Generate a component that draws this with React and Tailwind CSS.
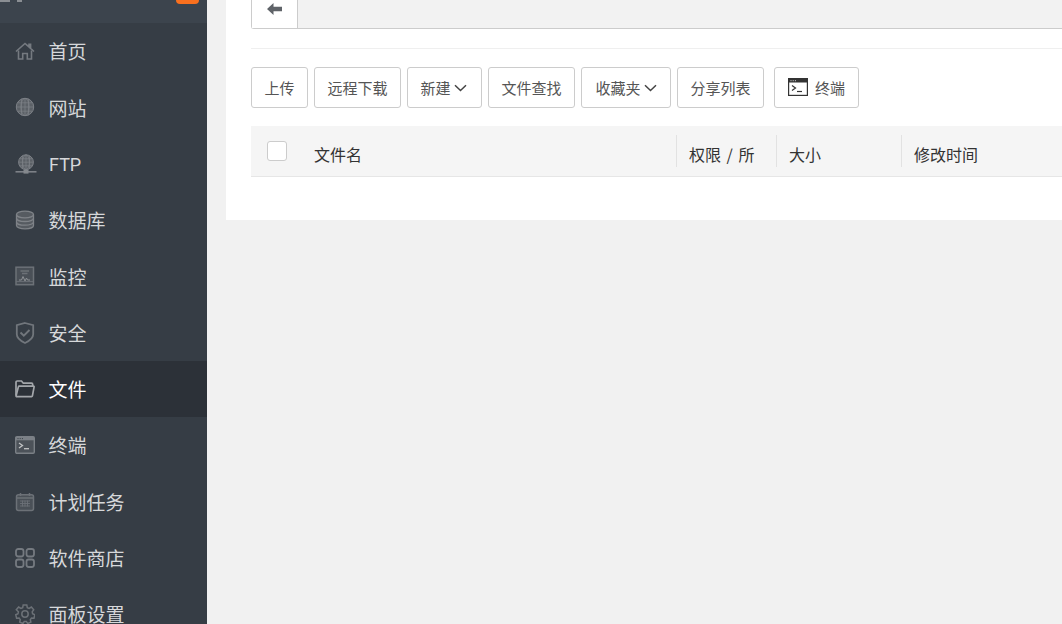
import React from "react";

const S = "#757a80";
const Home = () => (
  <svg width="20" height="20" viewBox="0 0 20 20" fill="none" stroke={S} strokeWidth="1.600">
    <path d="M1 10.500 10 2.500l4 3.400V3.200h1.600v4.200l3.400 3.100" />
    <path d="M3.500 9.500V18h4.200v-5.500h4.600V18h4.200V9.500" />
  </svg>
);
const Globe = () => (
  <svg width="20" height="20" viewBox="0 0 20 20" fill="#5c6167" stroke="#7d8187" strokeWidth="0.700">
    <circle cx="10" cy="10" r="8.700" strokeWidth="1" />
    <ellipse cx="10" cy="10" rx="4.200" ry="8.600" fill="none" />
    <path d="M10 1.400v17.200M1.400 10h17.200M2.600 5.800h14.800M2.600 14.200h14.800M6.500 1.800v16.400M13.500 1.800v16.400" fill="none" />
  </svg>
);
const FtpIcon = () => (
  <svg width="22" height="20" viewBox="0 0 22 20" fill="#5c6167" stroke="#7d8187" strokeWidth="0.700">
    <circle cx="11" cy="8.200" r="7.400" strokeWidth="1" />
    <ellipse cx="11" cy="8.200" rx="3.400" ry="7.300" fill="none" />
    <path d="M11 1v14.600M3.700 8.200h14.600M4.600 4.800h12.800M4.600 11.800h12.800M7.500 2v12.500M14.500 2v12.500" fill="none" />
    <path d="M0.500 17.800h21" fill="none" strokeWidth="1.600" />
    <rect x="8.500" y="15.800" width="5" height="3.800" stroke="none" fill="#84888d" />
  </svg>
);
const Db = () => (
  <svg width="20" height="20" viewBox="0 0 20 20" fill="#565b61" stroke="#7f8388" strokeWidth="1.300">
    <path d="M1.500 4.500C1.500 2.600 5.300 1.200 10 1.200s8.500 1.400 8.500 3.300v11c0 1.900-3.800 3.300-8.500 3.300s-8.500-1.400-8.500-3.300z" />
    <path d="M1.500 4.500c0 1.900 3.800 3.300 8.500 3.300s8.500-1.400 8.500-3.300M1.500 8.200c0 1.900 3.800 3.300 8.500 3.300s8.500-1.400 8.500-3.300M1.500 11.900c0 1.900 3.800 3.300 8.500 3.300s8.500-1.400 8.500-3.300" fill="none" />
  </svg>
);
const Monitor = () => (
  <svg width="20" height="20" viewBox="0 0 20 20" fill="#4a5057" stroke="#6c7177" strokeWidth="1.500">
    <rect x="1" y="1.200" width="17.500" height="17.500" />
    <path d="M4 14h2.500l1.500-3.500 2 4.500 1.500-3 1 2h2.500" fill="none" stroke="#8d9195" strokeWidth="1" />
    <path d="M5.500 5h8.500M7 7.500h5.500" stroke="#6c7177" strokeWidth="1.400" fill="none" />
    <path d="M1 15.500h17.500" strokeWidth="0.800" fill="none" />
  </svg>
);
const Shield = () => (
  <svg width="20" height="22" viewBox="0 0 20 22" fill="none" stroke="#71767c" strokeWidth="1.800">
    <path d="M10 1 18.200 3.200v9c0 3.600-3.400 6.500-8.200 8.800-4.800-2.300-8.200-5.200-8.200-8.800v-9z" />
    <path d="m5.500 10.500 3.300 3.200 5.700-5.700" strokeWidth="1.900" />
  </svg>
);
const Folder = () => (
  <svg width="20" height="18" viewBox="0 0 20 18" fill="none" stroke="#a3a6aa" strokeWidth="1.700">
    <path d="M1 15.500V2.200C1 1.500 1.500 1 2.200 1h4.300l1.800 2.200h8.200c.7 0 1.200.5 1.200 1.200V6" />
    <path d="M4.200 6.200h14.300c.4 0 .7.300.6.700l-1.700 9c-.1.400-.4.700-.8.700H1.800c-.5 0-.8-.4-.7-.8l2.300-8.900c.1-.4.400-.7.800-.7z" />
  </svg>
);
const Term = () => (
  <svg width="20" height="18" viewBox="0 0 20 18">
    <rect x="0.700" y="0.700" width="18.600" height="16.600" rx="1.200" fill="#4c5259" stroke="#7b8086" strokeWidth="1.400" />
    <rect x="1" y="1" width="18" height="3.300" fill="#7b8086" />
    <path d="M2.500 2.600h1M4.700 2.600h1M6.900 2.600h1" stroke="#363d45" strokeWidth="1" />
    <path d="m4 7 3.500 2.500L4 12" fill="none" stroke="#c2c4c6" strokeWidth="1.300" />
    <path d="M9 12.700h5" stroke="#c2c4c6" strokeWidth="1.300" />
  </svg>
);
const Cal = () => (
  <svg width="20" height="20" viewBox="0 0 20 20" fill="#4a5057" stroke="#6c7177" strokeWidth="1.500">
    <rect x="1.500" y="2.700" width="17" height="15.800" rx="2" />
    <path d="M5.500 1v3M14.500 1v3M1.500 6h17" />
    <path d="M5 9h10M5 11.500h10M5 14h10M7.500 8.500v6M10 8.500v6M12.500 8.500v6" strokeWidth="0.900" />
  </svg>
);
const Grid = () => (
  <svg width="20" height="20" viewBox="0 0 20 20" fill="none" stroke="#757a80" strokeWidth="1.800">
    <rect x="1" y="1" width="7.500" height="7.500" rx="2.200" />
    <rect x="11.500" y="1" width="7.500" height="7.500" rx="2.200" />
    <rect x="1" y="11.500" width="7.500" height="7.500" rx="2.200" />
    <rect x="11.500" y="11.500" width="7.500" height="7.500" rx="2.200" />
  </svg>
);
const Gear = () => (
  <svg width="20" height="20" viewBox="0 0 20 20" fill="none" stroke="#6c7177" strokeWidth="1.500">
    <path d="M8.200 1h3.600l.5 2.600 1.800.8L16.400 3l2.300 2.700-1.500 2.100.4 1.900 2.200 1.100-.8 3.400-2.500-.1-1.200 1.500.6 2.500-3.200 1.400-1.400-2.100h-2l-1.400 2.100-3.200-1.400.6-2.500-1.200-1.500-2.500.1-.8-3.400 2.200-1.100.4-1.900L1.300 5.700 3.600 3l2.300 1.400 1.800-.8z" />
    <circle cx="10" cy="10" r="3.200" />
  </svg>
);

const items = [
  ["首页", Home], ["网站", Globe], ["FTP", FtpIcon], ["数据库", Db], ["监控", Monitor], ["安全", Shield],
  ["文件", Folder, true], ["终端", Term], ["计划任务", Cal], ["软件商店", Grid], ["面板设置", Gear],
];

const Chev = () => (
  <svg width="13" height="8" viewBox="0 0 13 8" fill="none" stroke="#444" strokeWidth="1.500" className="ml-[3px]">
    <path d="m1 1.200 5.500 5.300 5.500-5.300" />
  </svg>
);

const Btn = ({ children, w }) => (
  <div className={`h-[41px] flex items-center justify-center border border-[#ccc] rounded-[3px] bg-white text-[#555] text-[15px] pt-[1px] ${w}`}>
    {children}
  </div>
);

const Th = ({ w, children, first }) => (
  <div className={`h-full flex items-center ${w}`}>
    <div className={`h-[32px] w-full pl-3 pt-[5px] flex items-center text-[16px] text-[#333] whitespace-nowrap [word-spacing:2px] ${first ? "" : "border-l border-[#e2e2e2]"}`}>{children}</div>
  </div>
);

export default function App() {
  return (
    <div className="w-[1062px] h-[624px] overflow-hidden flex bg-[#f1f1f1] font-['Noto_Sans_CJK_SC',sans-serif]">
      <aside className="w-[207px] h-full shrink-0 bg-[#363d45] flex flex-col overflow-hidden">
        <div className="h-[23px] shrink-0 bg-[#3c444d] relative">
          <div className="absolute left-0 top-0 w-[10px] h-[2px] bg-[#8a8e93]" />
          <div className="absolute left-[17px] top-0 w-[5px] h-[2px] bg-[#8a8e93]" />
          <div className="absolute left-[176px] top-0 w-[23px] h-[4px] rounded-b-[6px] bg-[#f9701e]" />
        </div>
        {items.map(([label, Icon, active]) => (
          <div key={label} className={`h-[56.3px] shrink-0 flex items-center ${active ? "bg-[#2c3138] text-white" : "text-[#d6d8da]"}`}>
            <div className="w-[49px] pl-[15px] flex items-center shrink-0"><Icon /></div>
            <span className={`pt-[1px] ${label === "FTP" ? "text-[18px] font-['Roboto',sans-serif]" : "text-[19px] -ml-[0.5px]"}`}>{label}</span>
          </div>
        ))}
      </aside>
      <main className="flex-1 min-w-0 pl-[19px]">
        <section className="w-[836px] h-[220px] bg-white pl-[25px] overflow-hidden">
          <div className="h-[29px] border-b border-l border-[#ccc] rounded-bl-[3px] bg-[#f2f2f2] flex">
            <div className="w-[46px] bg-white border-r border-[#ccc] flex items-center justify-center pb-[10px]">
              <svg width="15" height="12" viewBox="0 0 15 12" fill="#5f6368"><path d="M0 6 6.500 0v3.700H15v4.600H6.500V12z" /></svg>
            </div>
          </div>
          <div className="h-px mt-[19px] bg-[#efefef]" />
          <div className="flex mt-[18px]">
            <Btn w="w-[57px]">上传</Btn>
            <Btn w="w-[87px] ml-[6px]">远程下载</Btn>
            <Btn w="w-[75px] ml-[6px] pr-[2px]">新建<Chev /></Btn>
            <Btn w="w-[87px] ml-[6px]">文件查找</Btn>
            <Btn w="w-[90px] ml-[6px]">收藏夹<Chev /></Btn>
            <Btn w="w-[87px] ml-[6px]">分享列表</Btn>
            <Btn w="w-[85px] ml-[10px]">
              <svg width="20" height="18" viewBox="0 0 20 18" className="mr-[7px] -mt-[2px]">
                <rect x="0.600" y="0.600" width="18.800" height="16.800" fill="#fff" stroke="#333" strokeWidth="1.200" />
                <rect x="1" y="1" width="18" height="3.500" fill="#333" />
                <path d="M2.500 2.700h1M4.700 2.700h1M6.900 2.700h1" stroke="#ddd" strokeWidth="1" />
                <path d="m4 7.500 3.500 2.500L4 12.500" fill="none" stroke="#333" strokeWidth="1.200" />
                <path d="M9 13.500h5" stroke="#333" strokeWidth="1.200" />
              </svg>
              终端
            </Btn>
          </div>
          <div className="mt-[18px] h-[51px] bg-[#f5f5f5] border-b border-[#e6e6e6] flex items-center">
            <div className="w-[51px] shrink-0 pl-4">
              <div className="w-[20px] h-[20px] bg-white border border-[#ccc] rounded-[3px]" />
            </div>
            <Th first w="w-[374px]">文件名</Th>
            <Th w="w-[100px]">权限 / 所</Th>
            <Th w="w-[125px]">大小</Th>
            <Th w="w-[160px]">修改时间</Th>
          </div>
        </section>
      </main>
    </div>
  );
}
